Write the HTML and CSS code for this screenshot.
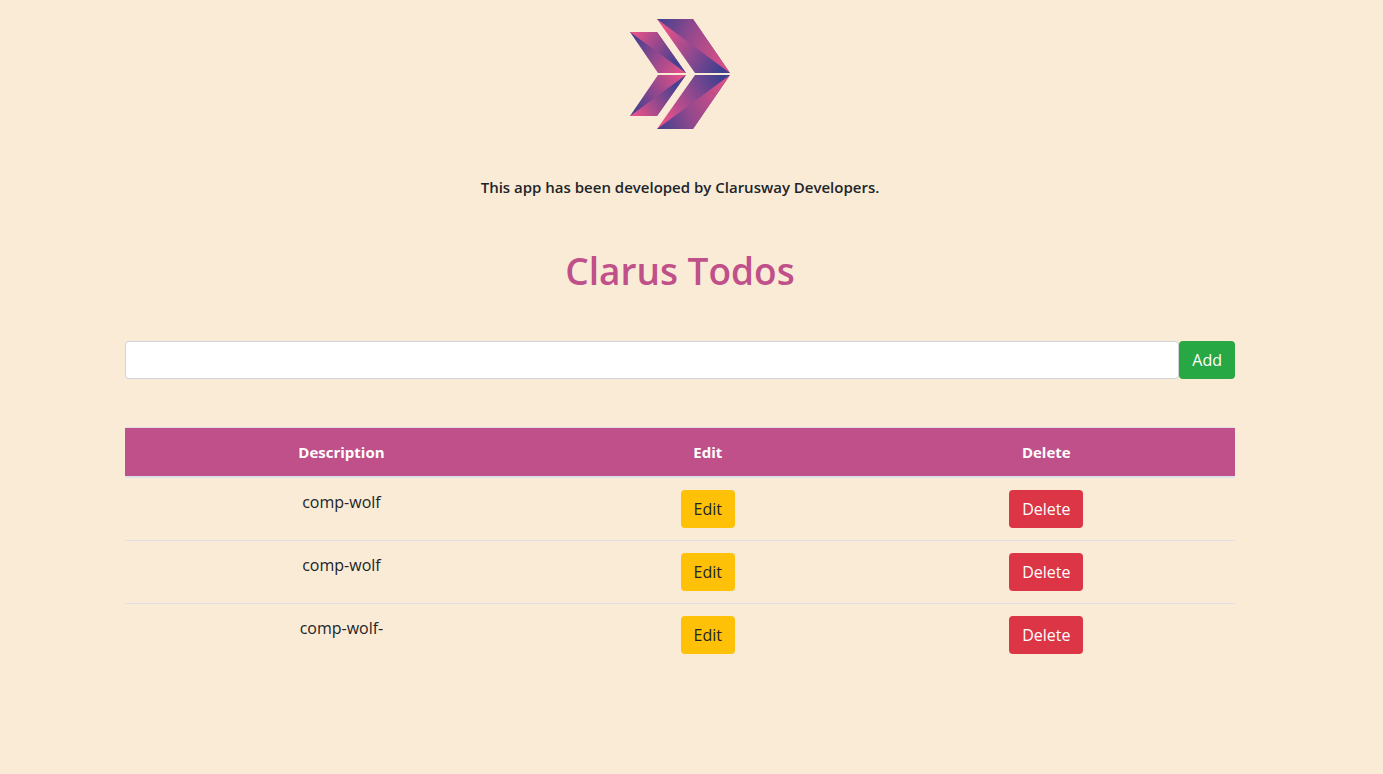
FILE: index.html
```html
<!DOCTYPE html>
<html lang="en">
<head>
<meta charset="utf-8">
<title>Clarus Todos</title>
<link rel="stylesheet" href="styles.css">
</head>
<body>
<main class="container">
  <svg class="logo" viewBox="0 0 100 110" role="img" aria-label="Clarusway">
    <defs>
      <linearGradient id="big-upper" gradientUnits="userSpaceOnUse" x1="27" y1="0" x2="100" y2="36"><stop offset="0" stop-color="#40408f"/><stop offset=".45" stop-color="#94498d"/><stop offset="1" stop-color="#dc5086"/></linearGradient>
      <linearGradient id="big-lower" gradientUnits="userSpaceOnUse" x1="34" y1="10" x2="94" y2="46"><stop offset="0" stop-color="#e4518a"/><stop offset=".5" stop-color="#94498f"/><stop offset="1" stop-color="#3f3f90"/></linearGradient>
      <linearGradient id="small-upper" gradientUnits="userSpaceOnUse" x1="6" y1="13" x2="48" y2="40"><stop offset="0" stop-color="#e4518a"/><stop offset="1" stop-color="#45408f"/></linearGradient>
      <linearGradient id="small-lower" gradientUnits="userSpaceOnUse" x1="2" y1="17" x2="54" y2="50"><stop offset="0" stop-color="#3f3f90"/><stop offset="1" stop-color="#e4518a"/></linearGradient>
      <g id="half">
        <path fill="url(#big-lower)" d="M27 0H63L100 54H65Z"/>
        <path fill="url(#big-upper)" d="M27 0H63L100 54Z"/>
        <path fill="url(#small-lower)" d="M0 13H27L56 54H28Z"/>
        <path fill="url(#small-upper)" d="M0 13H27L56 54Z"/>
      </g>
    </defs>
    <use href="#half"/>
    <use href="#half" transform="matrix(1 0 0 -1 0 110)"/>
  </svg>
  <p class="credit">This app has been developed by Clarusway Developers.</p>
  <h1 class="title">Clarus Todos</h1>
  <form class="todo-form">
    <input class="field" type="text" aria-label="Description">
    <button class="btn add" type="button">Add</button>
  </form>
  <table class="todos">
    <thead><tr><th class="description">Description</th><th class="edit-column">Edit</th><th>Delete</th></tr></thead>
    <tbody>
      <tr><td>comp-wolf</td><td><button class="btn edit" type="button">Edit</button></td><td><button class="btn delete" type="button">Delete</button></td></tr>
      <tr><td>comp-wolf</td><td><button class="btn edit" type="button">Edit</button></td><td><button class="btn delete" type="button">Delete</button></td></tr>
      <tr><td>comp-wolf-</td><td><button class="btn edit" type="button">Edit</button></td><td><button class="btn delete" type="button">Delete</button></td></tr>
    </tbody>
  </table>
</main>
</body>
</html>
```
FILE: styles.css
```css
*{box-sizing:border-box}
body{margin:0;padding-right:23px;background:#faebd7;color:#212529;font:400 16px/24px "Open Sans","Noto Sans",sans-serif}
.container{max-width:1140px;margin:0 auto;padding:19px 15px;text-align:center}
.logo{display:block;width:100px;height:110px;margin:0 auto 46px}
.credit{margin:0 0 48px;font-size:15px;font-weight:600}
.title{margin:0 0 46px;color:#c05089;font-size:37px;line-height:48px;font-weight:600}
.todo-form{display:flex;margin-bottom:48px}
.field{flex:1;min-width:0;height:38px;padding:6px 12px;border:1px solid #ced4da;border-radius:4px;background:#fff;font:inherit}
.btn{height:38px;padding:6px 12px;border:1px solid transparent;border-radius:4px;font:inherit;color:#fff}
.add{background:#28a745}
.edit{background:#ffc107;color:#212529}
.delete{background:#dc3545}
.todos{width:100%;border-collapse:collapse;table-layout:fixed}
.todos th,.todos td{padding:12px;vertical-align:top;border-top:1px solid #dee2e6}
.todos thead th{background:#c05089;color:#fff;font-size:15px;border-bottom:2px solid #dee2e6}
.description{width:39%}
.edit-column{width:27%}
```
